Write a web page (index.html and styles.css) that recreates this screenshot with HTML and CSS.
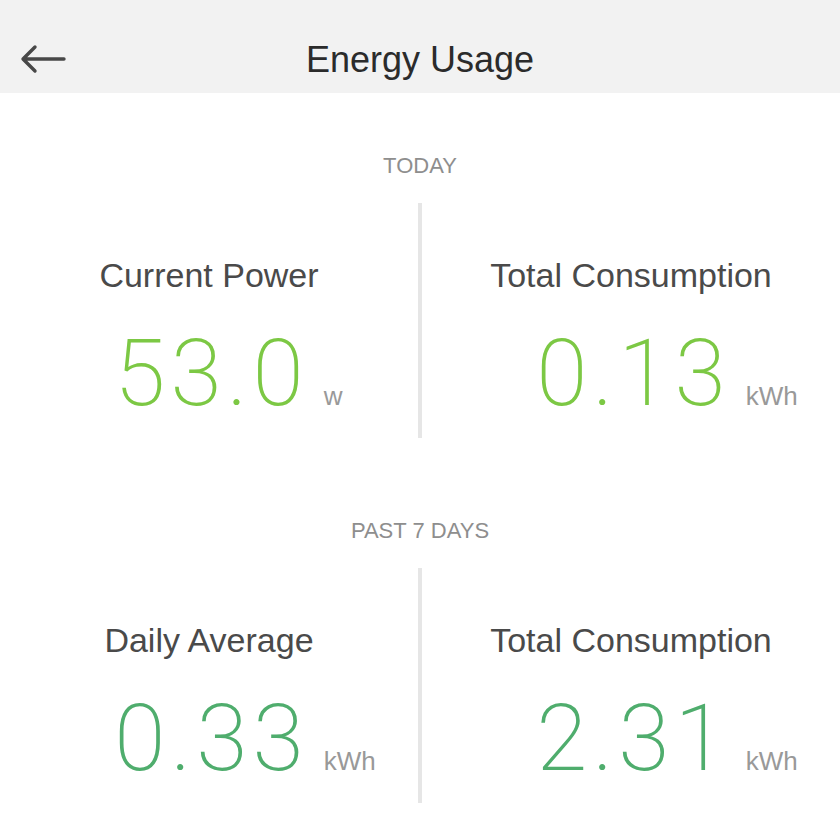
FILE: index.html
```html
<!DOCTYPE html>
<html lang="en">
<head>
    <meta charset="UTF-8">
    <meta name="viewport" content="width=device-width, initial-scale=1.0">
    <title>Energy Usage</title>
    <link rel="stylesheet" href="styles.css">
</head>
<body>
    <header class="topbar">
        <a class="back-button" href="#">
            <svg width="46" height="30" viewBox="0 0 46 30">
                <path d="M44 15H4M15 3L3 15l12 12" fill="none" stroke="#484848" stroke-width="3.4" stroke-linecap="round" stroke-linejoin="round"/>
            </svg>
        </a>
        <h1 class="title">Energy Usage</h1>
        <span></span>
    </header>

    <section class="period today">
        <h2 class="period-title">TODAY</h2>
        <div class="stats">
            <div class="stat">
                <p class="stat-label">Current Power</p>
                <div class="stat-value">
                    <span></span>
                    <span class="number">53.0</span>
                    <span class="unit">w</span>
                </div>
            </div>
            <div class="divider"></div>
            <div class="stat">
                <p class="stat-label">Total Consumption</p>
                <div class="stat-value">
                    <span></span>
                    <span class="number">0.13</span>
                    <span class="unit">kWh</span>
                </div>
            </div>
        </div>
    </section>

    <section class="period week">
        <h2 class="period-title">PAST 7 DAYS</h2>
        <div class="stats">
            <div class="stat">
                <p class="stat-label">Daily Average</p>
                <div class="stat-value">
                    <span></span>
                    <span class="number">0.33</span>
                    <span class="unit">kWh</span>
                </div>
            </div>
            <div class="divider"></div>
            <div class="stat">
                <p class="stat-label">Total Consumption</p>
                <div class="stat-value">
                    <span></span>
                    <span class="number">2.31</span>
                    <span class="unit">kWh</span>
                </div>
            </div>
        </div>
    </section>
</body>
</html>
```

FILE: styles.css
```css
body {
    margin: 0;
    background: #fff;
    font-family: "Liberation Sans", Arial, sans-serif;
    color: #4a4a4a;
}

.topbar {
    height: 93px;
    background: #f2f2f2;
    display: grid;
    grid-template-columns: 100px 1fr 100px;
    align-items: center;
}
.back-button {
    display: flex;
    padding-left: 20px;
    padding-top: 25px;
}
.title {
    margin: 0;
    text-align: center;
    font-size: 36px;
    font-weight: normal;
    color: #2b2b2b;
    padding-top: 26px;
}

.period-title {
    margin: 0;
    text-align: center;
    font-size: 22px;
    line-height: 26px;
    font-weight: normal;
    color: #8e8e8e;
}
.today {
    padding-top: 60px;
}
.week {
    padding-top: 80px;
}

.stats {
    display: grid;
    grid-template-columns: 1fr 4px 1fr;
    margin-top: 24px;
}
.divider {
    background: #e6e6e6;
}

.stat {
    padding-top: 52px;
    padding-bottom: 18px;
}
.stat-label {
    margin: 0;
    text-align: center;
    font-size: 34px;
    line-height: 40px;
}
.stat-value {
    display: grid;
    grid-template-columns: 1fr auto 1fr;
    align-items: baseline;
    margin-top: 33px;
}
.number {
    font-family: Roboto, sans-serif;
    font-weight: 200;
    font-size: 93px;
    line-height: 92px;
    letter-spacing: 5px;
    margin-right: -5px;
}
.unit {
    padding-left: 20px;
    font-size: 26px;
    color: #999;
}

.today .number {
    color: #7cc844;
}
.week .number {
    color: #4fad6d;
}
```
